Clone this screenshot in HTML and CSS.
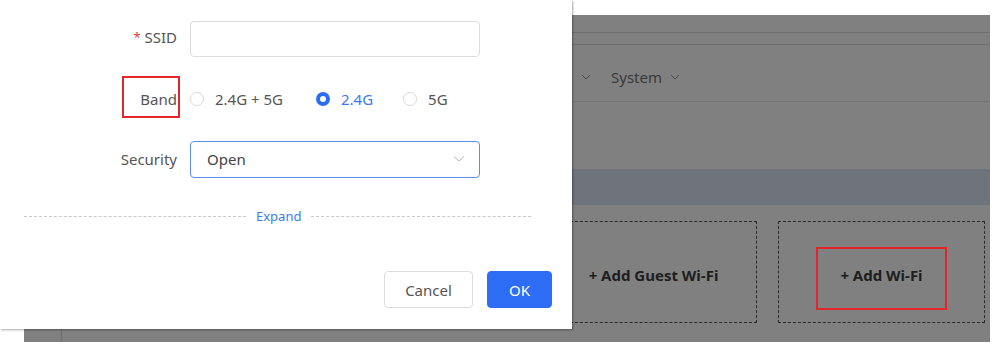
FILE: index.html
```html
<!DOCTYPE html>
<html lang="en">
<head>
    <meta charset="UTF-8">
    <meta name="viewport" content="width=device-width, initial-scale=1.0">
    <title>Add Wi-Fi</title>
    <link rel="stylesheet" href="styles.css">
</head>
<body>
    <div class="page">
        <div class="sidebar"></div>
        <div class="main">
            <div class="topbar"></div>
            <div class="subbar"></div>
            <div class="nav">
                <span class="nav-item"><svg class="chev" width="10" height="6" viewBox="0 0 10 6"><path d="M1 1 L5 5 L9 1" fill="none" stroke="#4a4a4a" stroke-width="1"/></svg></span>
                <span class="nav-item">System <svg class="chev" width="10" height="6" viewBox="0 0 10 6"><path d="M1 1 L5 5 L9 1" fill="none" stroke="#4a4a4a" stroke-width="1"/></svg></span>
            </div>
            <div class="band"></div>
            <div class="cards">
                <div class="card">+ Add Guest Wi-Fi</div>
                <div class="card">
                    <span class="mark">+ Add Wi-Fi</span>
                </div>
            </div>
        </div>
    </div>

    <div class="modal">
        <div class="form">
            <div class="row">
                <label class="label"><span class="req">*</span> SSID</label>
                <div class="control"><input class="input" type="text"></div>
            </div>
            <div class="row">
                <label class="label"><span class="mark-box"></span>Band</label>
                <div class="control radios">
                    <span class="radio"><i class="dot"></i>2.4G + 5G</span>
                    <span class="radio checked"><i class="dot"></i>2.4G</span>
                    <span class="radio"><i class="dot"></i>5G</span>
                </div>
            </div>
            <div class="row">
                <label class="label">Security</label>
                <div class="control">
                    <div class="select">
                        <span>Open</span>
                        <svg width="12" height="8" viewBox="0 0 12 8"><path d="M1 1.5 L6 6 L11 1.5" fill="none" stroke="#b8b8b8" stroke-width="1"/></svg>
                    </div>
                </div>
            </div>
        </div>
        <div class="divider"><span>Expand</span></div>
        <div class="footer">
            <button class="btn">Cancel</button>
            <button class="btn primary">OK</button>
        </div>
    </div>
</body>
</html>
```

FILE: styles.css
```css
body {
    margin: 0;
    background: #fff;
    font-family: "Noto Sans", "Liberation Sans", sans-serif;
    position: relative;
    width: 994px;
    height: 348px;
    overflow: hidden;
}
.page {
    display: flex;
    margin: 15px 4px 0 24px;
    height: 327px;
    background: #808080;
}
.sidebar {
    width: 37px;
    border-right: 1px solid #6c6c6c;
}
.main {
    flex: 1;
    display: flex;
    flex-direction: column;
}
.topbar {
    height: 17px;
    border-bottom: 1px solid #6e6e6e;
}
.subbar {
    height: 11px;
    border-bottom: 1px solid #6e6e6e;
}
.nav {
    height: 57px;
    border-bottom: 1px solid #747474;
    display: flex;
    align-items: center;
    padding-left: 511px;
    gap: 20px;
    color: #3a3a3a;
    font-size: 15px;
    padding-top: 8px;
    box-sizing: border-box;
}
.nav-item {
    display: flex;
    align-items: center;
}
.chev {
    margin-left: 8px;
}
.band {
    margin-top: 67px;
    height: 36px;
    background: #6f747c;
}
.cards {
    margin-top: 16px;
    display: flex;
    justify-content: flex-end;
    gap: 21px;
    padding-right: 5px;
}
.card {
    box-sizing: border-box;
    width: 207px;
    height: 102px;
    padding-top: 6px;
    border: 1px dashed #2a2a2a;
    display: flex;
    align-items: center;
    justify-content: center;
    font-size: 15px;
    font-weight: bold;
    color: #1e1e1e;
}
.mark {
    box-sizing: border-box;
    border: 2px solid #e3262c;
    width: 131px;
    height: 63px;
    margin-top: 6px;
    display: flex;
    align-items: center;
    justify-content: center;
    padding-bottom: 6px;
}
.modal {
    position: absolute;
    left: 0;
    top: 0;
    width: 572px;
    height: 329px;
    background: #fff;
    box-shadow: 1px 1px 2px rgba(0, 0, 0, 0.35);
}
.form {
    padding-top: 21px;
}
.row {
    display: flex;
    align-items: center;
    height: 36px;
    margin-bottom: 24px;
}
.row:first-child .label {
    top: -2px;
}
.row:last-child {
    margin-bottom: 0;
}
.label {
    width: 177px;
    flex-shrink: 0;
    text-align: right;
    font-size: 15px;
    color: #555;
    position: relative;
}
.req {
    color: #e5343a;
    font-size: 13px;
    position: relative;
    top: -1px;
}
.mark-box {
    position: absolute;
    right: -3px;
    top: -13px;
    width: 54px;
    height: 38px;
    border: 2px solid #e3262c;
}
.control {
    margin-left: 13px;
    width: 290px;
}
.input {
    box-sizing: border-box;
    width: 290px;
    height: 36px;
    border: 1px solid #dcdcdc;
    border-radius: 4px;
    outline: none;
}
.radios {
    display: flex;
    align-items: center;
    width: auto;
    font-size: 15px;
    color: #555;
    white-space: nowrap;
}
.radio {
    display: flex;
    align-items: center;
    flex-shrink: 0;
    margin-right: 33px;
}
.radio .dot {
    box-sizing: border-box;
    width: 14px;
    height: 14px;
    border: 1px solid #d9d9d9;
    border-radius: 50%;
    margin-right: 11px;
}
.radio.checked {
    color: #3b78f5;
    margin-right: 30px;
}
.radio.checked .dot {
    border: 4px solid #2d6df6;
    background: #fff;
}
.select {
    box-sizing: border-box;
    height: 37px;
    border: 1px solid #5a8ef7;
    border-radius: 4px;
    display: flex;
    align-items: center;
    justify-content: space-between;
    padding: 0 14px 0 16px;
    font-size: 15px;
    color: #444;
}
.divider {
    margin: 30px 41px 0 24px;
    display: flex;
    align-items: center;
    gap: 10px;
    font-size: 13px;
    color: #3b7cf6;
}
.divider::before,
.divider::after {
    content: "";
    flex: 1;
    border-top: 1px dashed #c8c8c8;
}
.divider::before {
    flex: 0 0 222px;
}
.footer {
    display: flex;
    justify-content: flex-end;
    gap: 14px;
    padding-right: 20px;
    margin-top: 46px;
}
.btn {
    height: 37px;
    width: 89px;
    border: 1px solid #dcdcdc;
    border-radius: 4px;
    background: #fff;
    font-family: inherit;
    font-size: 15px;
    color: #555;
}
.btn.primary {
    width: 65px;
    background: #2d6df6;
    border-color: #2d6df6;
    color: #fff;
}
```
